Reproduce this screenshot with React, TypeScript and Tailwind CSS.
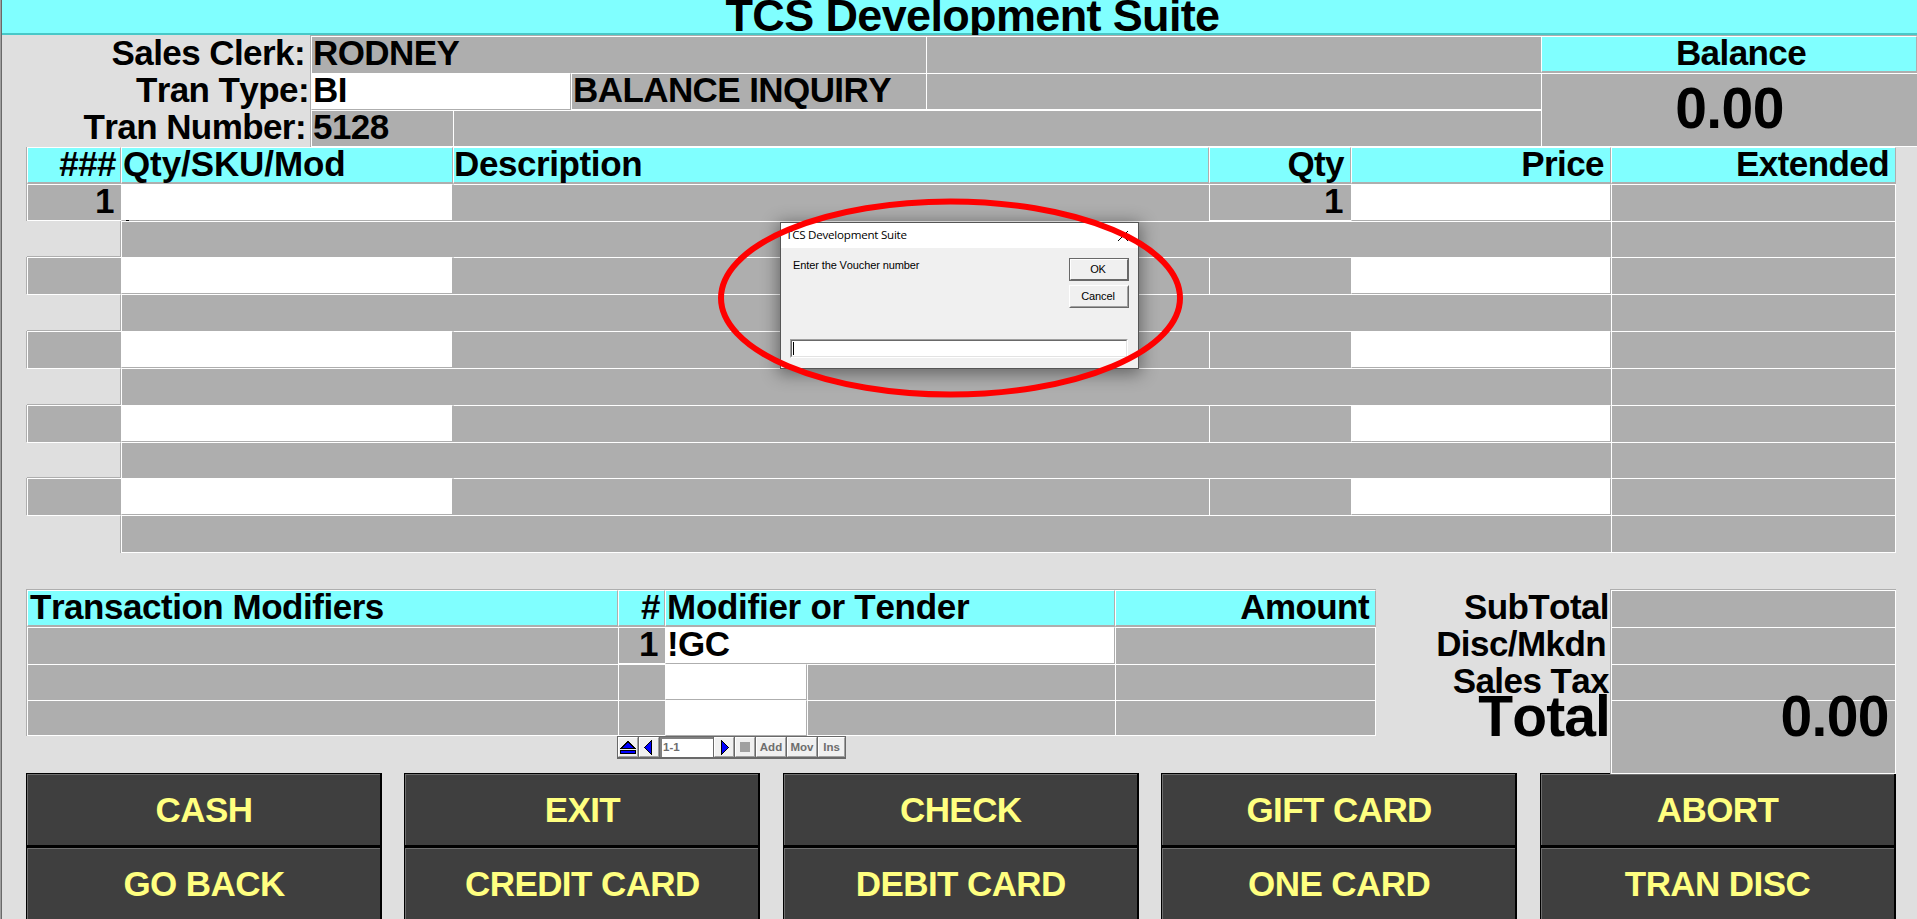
import type { ReactNode } from "react";

type Tone = "gray" | "cyan" | "white";

const tones: Record<Tone, string> = {
  gray: "bg-[#aeaeae] border-l border-t border-white",
  cyan: "bg-[#80ffff] border-l border-t border-l-white border-t-white border-r border-r-[#aeaeae] border-b-2 border-b-[#aeaeae]",
  white: "bg-white border-l border-t border-l-white border-t-white border-r border-r-[#aeaeae] border-b border-b-[#aeaeae]",
};

function Cell({ tone = "gray", className = "", children }: { tone?: Tone; className?: string; children?: ReactNode }) {
  return <div className={`shrink-0 whitespace-nowrap ${tones[tone]} ${className}`}>{children}</div>;
}

function ItemRow({ height, first }: { height: string; first?: boolean }) {
  return (
    <div className={`flex border-l border-[#aeaeae] ${height}`}>
      <Cell className={`w-[94px] pr-[7px] text-right ${first ? "border-b border-b-white" : ""}`}>{first ? "1" : ""}</Cell>
      <Cell tone="white" className="flex w-[332px] items-end">
        {first && <span className="ml-1 -mb-px block h-px w-[3px] bg-black" />}
      </Cell>
      <Cell className="w-[756px] border-l-[#aeaeae]" />
      <Cell className={`w-[142px] pr-[8px] text-right ${first ? "border-b border-b-white" : ""}`}>{first ? "1" : ""}</Cell>
      <Cell tone="white" className="w-[260px]" />
      <Cell className="w-[285px] border-r" />
    </div>
  );
}

function SubRow({ height, first, last }: { height: string; first?: boolean; last?: boolean }) {
  return (
    <div className={`flex border-l border-transparent ${height}`}>
      <div
        className={`w-[94px] shrink-0 border-r border-r-[#aeaeae] ${first ? "" : "border-t border-t-white"} ${last ? "" : "border-b border-b-[#aeaeae]"}`}
      />
      <Cell className={`w-[1490px] ${last ? "border-b" : ""}`} />
      <Cell className={`w-[285px] border-r ${last ? "border-b" : ""}`} />
    </div>
  );
}

function ModifierRow({ height, label, last }: { height: string; label?: string; last?: boolean }) {
  const bottom = last ? "border-b border-b-white" : "";
  return (
    <div className={`flex ${height}`}>
      <Cell className={`w-[591px] ${bottom}`} />
      <Cell className={`w-[47px] pr-[7px] text-right ${label ? "border-b border-b-white" : bottom}`}>{label ? "1" : ""}</Cell>
      {label ? (
        <Cell tone="white" className="w-[450px] pl-px">{label}</Cell>
      ) : (
        <>
          <Cell tone="white" className="w-[142px]" />
          <Cell className={`w-[308px] ${bottom}`} />
        </>
      )}
      <Cell className={`w-[261px] border-r ${bottom}`} />
    </div>
  );
}

function NavButton({ width, children }: { width: string; children: ReactNode }) {
  return (
    <div className={`flex h-[20px] shrink-0 items-center justify-center border border-b-[#a0a0a0] border-l-white border-r-[#a0a0a0] border-t-white bg-[#f0f0f0] ${width}`}>
      {children}
    </div>
  );
}

function Navigator() {
  return (
    <div className="ml-[591px] flex h-[23px] w-[229px] gap-px border border-b-2 border-[#696969] bg-[#696969] text-[11.5px] leading-[18px] tracking-normal text-[#6d6d6d]">
      <NavButton width="w-[20px]">
        <svg width="16" height="13" viewBox="0 0 16 13" shapeRendering="crispEdges">
          <path d="M8 0.5 L15 7.5 H1 Z" fill="#0000ff" stroke="#000" />
          <rect x="0.5" y="9.5" width="15" height="3" fill="#0000ff" stroke="#000" />
        </svg>
      </NavButton>
      <NavButton width="w-[20px]">
        <svg width="16" height="15" viewBox="0 0 16 15" shapeRendering="crispEdges">
          <path d="M10.5 0.5 V14.5 L3.5 7.5 Z" fill="#0000ff" stroke="#000" />
        </svg>
      </NavButton>
      <div className="h-[20px] w-[53px] shrink-0 border-l-2 border-t-2 border-[#808080] bg-white pl-px leading-[17px]">1-1</div>
      <NavButton width="w-[20px]">
        <svg width="16" height="15" viewBox="0 0 16 15" shapeRendering="crispEdges">
          <path d="M5.5 0.5 V14.5 L12.5 7.5 Z" fill="#0000ff" stroke="#000" />
        </svg>
      </NavButton>
      <NavButton width="w-[20px]">
        <span className="block size-[10px] bg-[#a0a0a0]" />
      </NavButton>
      <NavButton width="w-[30px]">Add</NavButton>
      <NavButton width="w-[30px]">Mov</NavButton>
      <NavButton width="w-[27px]">Ins</NavButton>
    </div>
  );
}

function ActionButton({ children }: { children: ReactNode }) {
  return (
    <div className="h-[74px] w-[356px] border-b-2 border-l border-r-2 border-t border-black">
      <div className="flex h-full items-center justify-center border-l border-t border-[#6e6e6e] bg-[#3f3f3f] text-[#ffff80]">
        {children}
      </div>
    </div>
  );
}

const actions = [
  ["CASH", "GO BACK"],
  ["EXIT", "CREDIT CARD"],
  ["CHECK", "DEBIT CARD"],
  ["GIFT CARD", "ONE CARD"],
  ["ABORT", "TRAN DISC"],
];

function VoucherDialog() {
  return (
    <div className="absolute left-[779px] top-[222px] h-[147px] w-[359px] border border-[#555] bg-[#f0f0f0] text-[11px] font-normal leading-[14px] text-black shadow-[0_3px_16px_2px_rgba(0,0,0,0.42)]">
      <div className="flex h-[25px] items-center justify-between bg-white pl-[5px] pr-[9px] font-['Open_Sans','Noto_Sans',sans-serif] text-[11.6px] tracking-[-0.24px]">
        <span className="-mt-px">TCS Development Suite</span>
        <svg width="12" height="12" viewBox="0 0 12 12">
          <path d="M1 1 L11 11 M11 1 L1 11" stroke="#000" strokeWidth="1" />
        </svg>
      </div>
      <div className="flex justify-between pl-[12px] pr-[9px]">
        <span className="mt-[10px] tracking-[-0.11px]">Enter the Voucher number</span>
        <div className="mt-[10px] flex flex-col gap-[4px] text-center tracking-[-0.1px]">
          <div className="h-[23px] w-[60px] border border-[#696969]">
            <div className="h-full border border-b-[#696969] border-l-white border-r-[#696969] border-t-white pr-[2px] leading-[18px]">OK</div>
          </div>
          <div className="h-[23px] w-[60px] border border-b-[#696969] border-l-white border-r-[#696969] border-t-white">
            <div className="h-full border border-b-[#a0a0a0] border-l-[#f0f0f0] border-r-[#a0a0a0] border-t-[#f0f0f0] pr-[2px] leading-[18px]">Cancel</div>
          </div>
        </div>
      </div>
      <div className="ml-[9px] mt-[31px] h-[19px] w-[338px] border border-b-white border-l-[#a0a0a0] border-r-white border-t-[#a0a0a0]">
        <div className="flex h-full items-center border border-b-[#e3e3e3] border-l-[#696969] border-r-[#e3e3e3] border-t-[#696969] bg-white pl-px">
          <span className="block h-[13px] w-px bg-black" />
        </div>
      </div>
    </div>
  );
}

export default function App() {
  return (
    <div className="relative h-[919px] w-[1917px] overflow-hidden border-l border-[#a0a0a0] bg-[#dfdfdf] font-['Liberation_Sans',Arial,sans-serif] text-[35px] font-bold leading-[32px] tracking-[-0.58px] text-black [font-kerning:none]">
      <div className="flex h-full flex-col border-l border-[#696969]">
        <header className="h-[35px] shrink-0 overflow-hidden bg-[#80ffff] shadow-[inset_0_-2px_0_#48c8c8]">
          <h1 className="-mt-[6px] pl-[26px] text-center text-[45px] leading-[44px] tracking-[-0.65px]">TCS Development Suite</h1>
        </header>

        <section className="flex h-[112px] shrink-0">
          <div className="w-[308px] shrink-0 pt-[2px] text-right">
            <div className="h-[37px] pr-[5px]">Sales Clerk:</div>
            <div className="h-[37px] pr-px">Tran Type:</div>
            <div className="h-[36px] pr-[4px]">Tran Number:</div>
          </div>
          <div className="w-[1231px] shrink-0 border-l border-t border-[#aeaeae]">
            <div className="flex h-[37px]">
              <Cell className="w-[615px] pl-px">RODNEY</Cell>
              <Cell className="grow" />
            </div>
            <div className="flex h-[37px]">
              <Cell tone="white" className="w-[260px] pl-px">BI</Cell>
              <Cell className="w-[355px] border-b pl-px">BALANCE INQUIRY</Cell>
              <Cell className="grow border-b" />
            </div>
            <div className="flex h-[37px]">
              <Cell className="w-[142px] border-b pl-px">5128</Cell>
              <Cell className="grow border-b" />
            </div>
          </div>
          <div className="grow border-t border-[#aeaeae] text-center">
            <Cell tone="cyan" className="h-[37px] pl-[24px]">Balance</Cell>
            <Cell className="h-[74px] border-b text-[57px] leading-[69px]">0.00</Cell>
          </div>
        </section>

        <section className="ml-[24px] w-[1870px] shrink-0">
          <div className="flex h-[37px] border-l border-[#aeaeae]">
            <Cell tone="cyan" className="w-[94px] pr-[4px] text-right">###</Cell>
            <Cell tone="cyan" className="w-[332px] pl-px tracking-[-0.1px]">Qty/SKU/Mod</Cell>
            <Cell tone="cyan" className="w-[756px] tracking-[-0.4px]">Description</Cell>
            <Cell tone="cyan" className="w-[142px] pr-[6px] text-right">Qty</Cell>
            <Cell tone="cyan" className="w-[260px] pr-[6px] text-right">Price</Cell>
            <Cell tone="cyan" className="w-[285px] pr-[6px] text-right">Extended</Cell>
          </div>
          <ItemRow height="h-[37px]" first />
          <SubRow height="h-[36px]" first />
          <ItemRow height="h-[37px]" />
          <SubRow height="h-[37px]" />
          <ItemRow height="h-[37px]" />
          <SubRow height="h-[37px]" />
          <ItemRow height="h-[37px]" />
          <SubRow height="h-[36px]" />
          <ItemRow height="h-[37px]" />
          <SubRow height="h-[38px]" last />
        </section>

        <section className="relative ml-[24px] mt-[36px] flex h-[184px] shrink-0">
          <div className="w-[1350px] shrink-0">
            <div className="border-l border-t border-[#aeaeae]">
              <div className="flex h-[37px]">
                <Cell tone="cyan" className="w-[591px] pl-[2px] tracking-[-0.47px]">Transaction Modifiers</Cell>
                <Cell tone="cyan" className="w-[47px] pr-[4px] text-right">#</Cell>
                <Cell tone="cyan" className="w-[450px] pl-px tracking-[-0.27px]">Modifier or Tender</Cell>
                <Cell tone="cyan" className="w-[261px] pr-[6px] text-right">Amount</Cell>
              </div>
              <ModifierRow height="h-[37px]" label="!GC" />
              <ModifierRow height="h-[36px]" />
              <ModifierRow height="h-[36px]" last />
            </div>
            <Navigator />
          </div>
          <div className="w-[234px] shrink-0 pt-[2px] text-right">
            <div className="h-[37px] pr-px">SubTotal</div>
            <div className="h-[37px] pr-[4px]">Disc/Mkdn</div>
            <div className="h-[35px] pr-px">Sales Tax</div>
            <div className="text-[57px] leading-[33px] tracking-[-0.9px]">Total</div>
          </div>
          <div className="h-[185px] w-[286px] border-l border-t border-[#aeaeae]">
            <Cell className="h-[37px] border-r" />
            <Cell className="h-[37px] border-r" />
            <Cell className="h-[36px] border-r" />
            <Cell className="h-[74px] border-b border-r pr-[6px] text-right text-[57px] leading-[31px]">0.00</Cell>
          </div>
        </section>

        <section className="ml-[24px] flex w-[1869.5px] shrink-0 justify-between">
          {actions.map(([top, bottom]) => (
            <div key={top}>
              <ActionButton>{top}</ActionButton>
              <ActionButton>{bottom}</ActionButton>
            </div>
          ))}
        </section>
      </div>

      <VoucherDialog />
      <svg className="absolute left-[715px] top-[197px]" width="470" height="202" viewBox="0 0 470 202">
        <ellipse cx="234.5" cy="101" rx="229.5" ry="96.5" fill="none" stroke="#ff0000" strokeWidth="6" />
      </svg>
    </div>
  );
}
